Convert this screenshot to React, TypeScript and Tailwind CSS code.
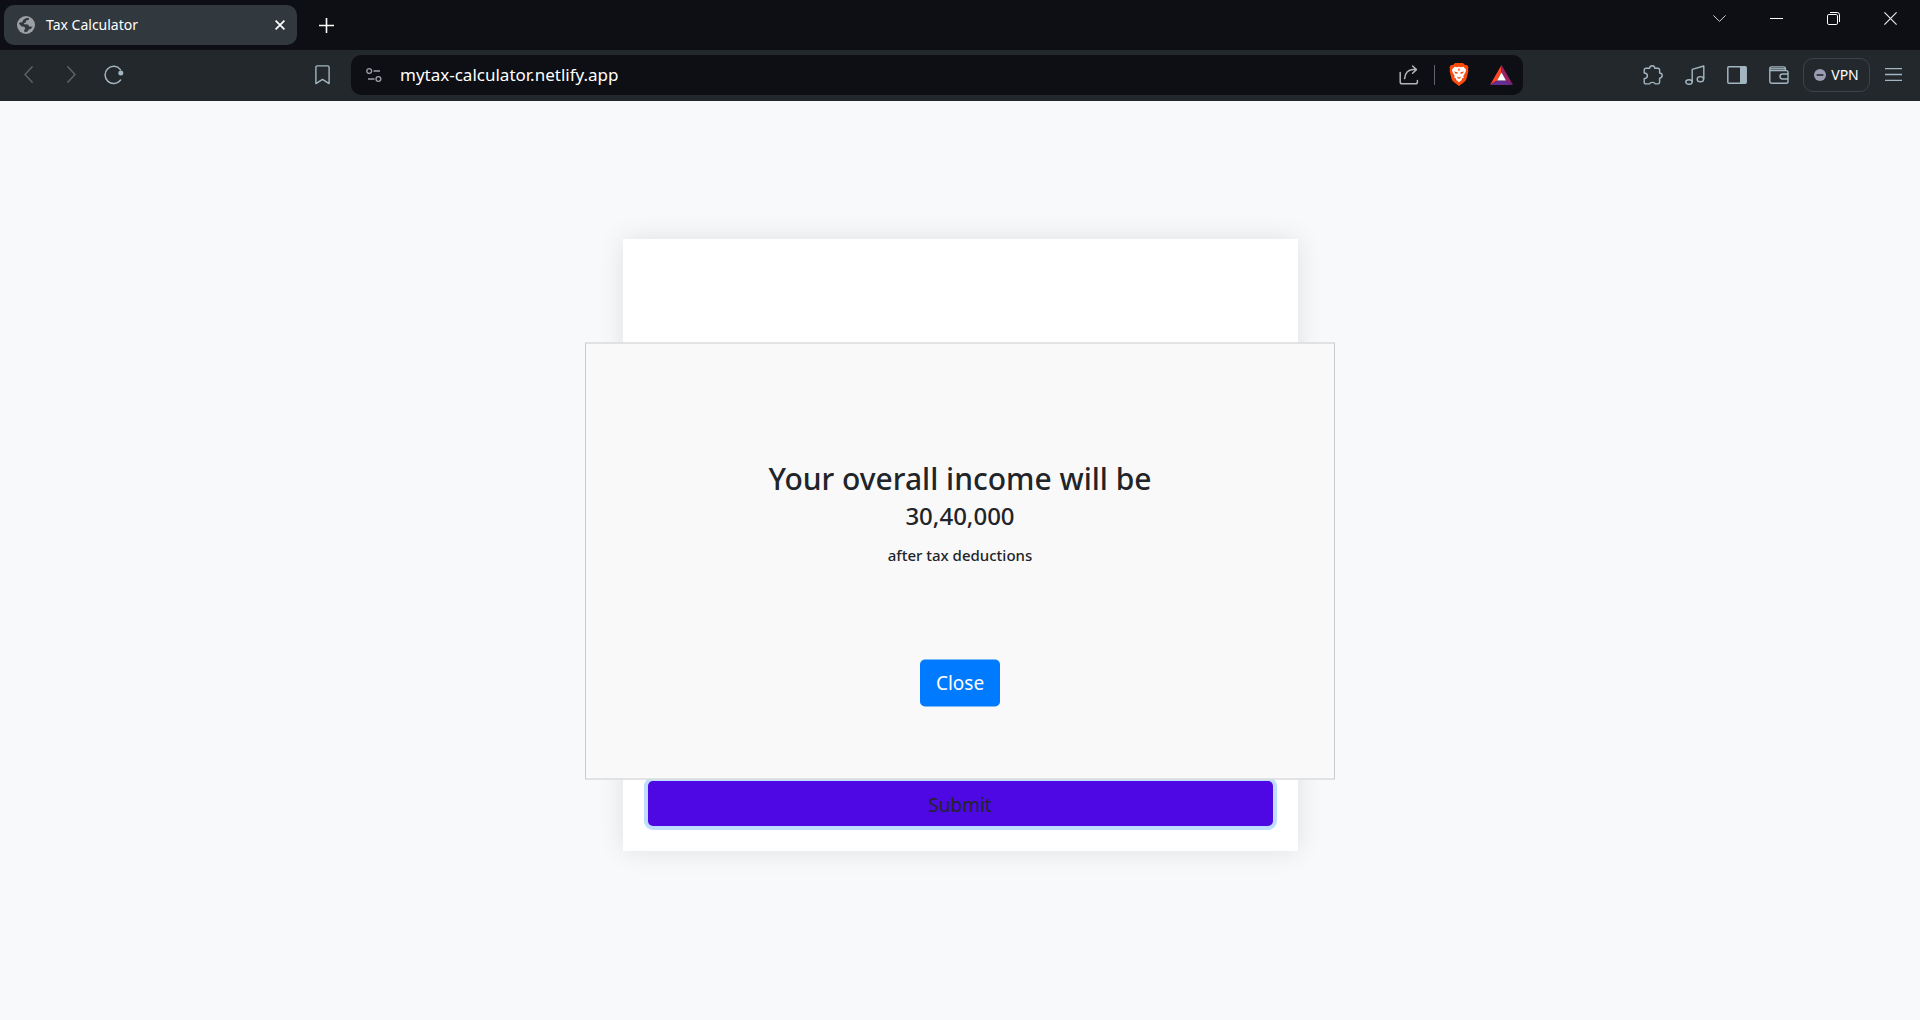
import type { ReactNode } from "react";

function IconButton({ label, className = "", children }: { label: string; className?: string; children: ReactNode }) {
  return (
    <button type="button" aria-label={label} className={`flex shrink-0 items-center justify-center ${className}`}>
      {children}
    </button>
  );
}

function GlobeIcon() {
  return (
    <svg width="18" height="18" viewBox="0 0 18 18" aria-hidden="true">
      <circle cx="9" cy="9" r="9" fill="#9aa0a6" />
      <path
        d="M9.2 2 L12 1.9 L11.6 3.9 L9 4.6 L8.8 6.6 L6.8 7.2 L7 8.3 L11 8.4 L12.2 10.6 L15.6 10.8 L13.6 13 L11.6 13.4 L10.6 15.4 L7.8 16.2 L7 14.4 L8.4 12.2 L7 10.8 L4.6 10.4 L2 7.8 L2.6 6.6 L5.2 6.2 L6.2 4 Z"
        fill="#31393e"
      />
    </svg>
  );
}

function BraveIcon() {
  return (
    <svg width="20" height="23" viewBox="0 0 20 23" aria-hidden="true">
      <path
        d="M6 0 H14 L16 2 L18 2 L19.6 4.2 L19 6 L19.4 8 L17.4 16 Q16.8 18 15 19.3 L10 23 L5 19.3 Q3.2 18 2.6 16 L.6 8 L1 6 L.4 4.2 L2 2 L4 2 Z"
        fill="#fb4a0b"
      />
      <path
        d="M5.6 3.8 L8 4.3 L10 3.8 L12 4.3 L14.4 3.8 L17 6.6 L16.6 9 L14.3 13 L14.8 15 L13 15.2 L12.8 17 L10 19.2 L7.2 17 L7 15.2 L5.2 15 L5.7 13 L3.4 9 L3 6.6 Z"
        fill="#fff"
      />
      <path
        d="M5 8.4 L8.6 9.2 L8.4 10.8 L6.4 10.6 Z M15 8.4 L11.4 9.2 L11.6 10.8 L13.6 10.6 Z M8 13.4 L10 14.4 L12 13.4 L11.4 15 L10 16 L8.6 15 Z M9.2 5.6 H10.8 L10.5 8 H9.5 Z"
        fill="#fb4a0b"
      />
    </svg>
  );
}

function TabStrip() {
  return (
    <header className="flex h-[50px] items-start bg-[#0d0f14] text-white">
      <div className="ml-1 mt-[5px] flex h-10 w-[293px] items-center rounded-[10px] bg-[#31393e] pl-[13px] pr-[7px]">
        <GlobeIcon />
        <span className="ml-[11px] flex-1 text-[14px] leading-5">Tax Calculator</span>
        <IconButton label="Close tab" className="size-5">
          <svg width="10" height="10" viewBox="0 0 10 10" stroke="currentColor" strokeWidth="1.7" aria-hidden="true">
            <path d="M.6 .6 L9.4 9.4 M9.4 .6 L.6 9.4" />
          </svg>
        </IconButton>
      </div>
      <IconButton label="New tab" className="ml-[14px] mt-[10px] size-[30px]">
        <svg width="15" height="15" viewBox="0 0 15 15" stroke="currentColor" strokeWidth="1.6" aria-hidden="true">
          <path d="M7.5 0 V15 M0 7.5 H15" />
        </svg>
      </IconButton>
      <div className="ml-auto flex pr-px">
        <IconButton label="Search tabs" className="h-[37px] w-[57px]">
          <svg width="13" height="7" viewBox="0 0 13 7" fill="none" stroke="#d0d0d2" aria-hidden="true">
            <path d="M.4 .4 L6.5 6.4 L12.6 .4" />
          </svg>
        </IconButton>
        <IconButton label="Minimize" className="h-[37px] w-[57px]">
          <svg width="13" height="1" viewBox="0 0 13 1" fill="#fff" aria-hidden="true">
            <path d="M0 0 H13 V1 H0 Z" />
          </svg>
        </IconButton>
        <IconButton label="Restore" className="h-[37px] w-[57px]">
          <svg width="13" height="13" viewBox="0 0 13 13" fill="none" stroke="#fff" aria-hidden="true">
            <rect x=".5" y="2.5" width="10" height="10" rx="1.3" />
            <path d="M3 .5 H10.2 Q12.5 .5 12.5 2.8 V10" />
          </svg>
        </IconButton>
        <IconButton label="Close window" className="h-[37px] w-[57px]">
          <svg width="13" height="13" viewBox="0 0 13 13" stroke="#e8e8e8" strokeWidth="1.2" aria-hidden="true">
            <path d="M.4 .4 L12.6 12.6 M12.6 .4 L.4 12.6" />
          </svg>
        </IconButton>
      </div>
    </header>
  );
}

function AddressBar() {
  return (
    <div className="flex h-10 flex-1 items-center rounded-[10px] bg-[#0d0f14] pl-[13px] pr-[9px]">
      <IconButton label="View site information" className="size-5">
        <svg width="16" height="16" viewBox="0 0 16 16" fill="none" stroke="#a0a1a8" strokeWidth="1.3" aria-hidden="true">
          <circle cx="3.2" cy="4" r="2.4" />
          <circle cx="12.4" cy="12" r="2.4" />
          <path d="M7.5 4 H14 M2 12 H8.5" />
        </svg>
      </IconButton>
      <input
        aria-label="Address"
        defaultValue="mytax-calculator.netlify.app"
        className="ml-4 min-w-0 flex-1 bg-transparent text-[17px] leading-6 text-white outline-none"
      />
      <IconButton label="Share" className="size-6">
        <svg width="20" height="20" viewBox="0 0 20 20" fill="none" stroke="#b3b4b8" strokeWidth="1.5" strokeLinecap="round" strokeLinejoin="round" aria-hidden="true">
          <path d="M1.2 7.5 V17 Q1.2 18.8 3 18.8 H16.6 Q18.4 18.8 18.4 17 V15.5" />
          <path d="M13.6 1 L17.4 4.6 L13.6 8.2 M17 4.6 H14 Q6.4 5.2 5.6 13.6" />
        </svg>
      </IconButton>
      <span className="ml-[13px] h-5 w-px bg-[#62646b]" />
      <IconButton label="Brave Shields" className="ml-[11px] size-[26px]">
        <BraveIcon />
      </IconButton>
      <IconButton label="Brave Rewards" className="ml-4 size-[26px]">
        <svg width="23" height="20" viewBox="0 0 23 20" aria-hidden="true">
          <path d="M11.5 0 L0 20 L7 15.5 L11.5 7.5 Z" fill="#ff4724" />
          <path d="M11.5 0 L23 20 L16 15.5 L11.5 7.5 Z" fill="#9e1f63" />
          <path d="M0 20 H23 L16 15.5 H7 Z" fill="#662d91" />
          <path d="M11.5 7.5 L16 15.5 H7 Z" fill="#fff" />
        </svg>
      </IconButton>
    </div>
  );
}

function Toolbar() {
  return (
    <nav aria-label="Browser toolbar" className="flex h-[51px] items-center bg-[#22282c] pb-[2px] text-[#a3b5c0]">
      <div className="flex w-[351px] shrink-0 items-center pl-4 pr-[17px]">
        <IconButton label="Back" className="size-6">
          <svg width="9" height="17" viewBox="0 0 9 17" fill="none" stroke="#5d6569" strokeWidth="1.4" strokeLinecap="round" aria-hidden="true">
            <path d="M8.2 .8 L1 8.5 L8.2 16.2" />
          </svg>
        </IconButton>
        <IconButton label="Forward" className="ml-[19px] size-6">
          <svg width="9" height="17" viewBox="0 0 9 17" fill="none" stroke="#5d6569" strokeWidth="1.4" strokeLinecap="round" aria-hidden="true">
            <path d="M.8 .8 L8 8.5 L.8 16.2" />
          </svg>
        </IconButton>
        <IconButton label="Reload" className="ml-[19px] size-6">
          <svg width="20" height="20" viewBox="0 0 20 20" fill="none" stroke="#a3b5c0" strokeWidth="1.5" strokeLinecap="round" aria-hidden="true">
            <path d="M16.4 4.6 A8.6 8.6 0 1 0 16.6 15" />
            <circle cx="16.8" cy="8" r="2.5" fill="#a3b5c0" stroke="none" />
          </svg>
        </IconButton>
        <IconButton label="Bookmark this tab" className="ml-auto size-6">
          <svg width="15" height="20" viewBox="0 0 15 20" fill="none" stroke="#a3b5c0" strokeWidth="1.4" strokeLinejoin="round" aria-hidden="true">
            <path d="M.9 18.6 V2.4 Q.9 .9 2.4 .9 H12.6 Q14.1 .9 14.1 2.4 V18.6 L7.5 14.4 Z" />
          </svg>
        </IconButton>
      </div>
      <AddressBar />
      <div className="flex w-[397px] shrink-0 items-center justify-end pr-[15px]">
        <IconButton label="Extensions" className="size-6">
          <svg width="20" height="20" viewBox="0 0 20 20" fill="none" stroke="currentColor" strokeWidth="1.4" strokeLinejoin="round" aria-hidden="true">
            <path d="M3 3.2 H6.6 Q6.8 .8 9.2 .8 Q11.6 .8 11.8 3.2 H14.8 Q16.6 3.2 16.6 5 V8 Q19.2 8.2 19.2 10.6 Q19.2 13 16.6 13.2 V17.2 Q16.6 18.9 14.8 18.9 H12.2 Q11.8 17.4 9.4 17.4 Q7 17.4 6.6 18.9 H3 Q1.2 18.9 1.2 17.2 V13.6 Q4.4 13.4 4.4 10.8 Q4.4 8.2 1.2 8 V5 Q1.2 3.2 3 3.2 Z" />
          </svg>
        </IconButton>
        <IconButton label="Media" className="ml-[18px] size-6">
          <svg width="20" height="20" viewBox="0 0 20 20" fill="none" stroke="currentColor" strokeWidth="1.4" strokeLinejoin="round" aria-hidden="true">
            <ellipse cx="4" cy="17" rx="3.2" ry="2.3" />
            <ellipse cx="15.4" cy="14.2" rx="3.2" ry="2.6" />
            <path d="M7.2 17 V4.4 L18.8 1 V14.2" />
          </svg>
        </IconButton>
        <IconButton label="Sidebar" className="ml-[18px] size-6">
          <svg width="20" height="18" viewBox="0 0 20 18" fill="none" aria-hidden="true">
            <rect x=".8" y=".8" width="18.4" height="16.4" rx="1" stroke="currentColor" strokeWidth="1.5" />
            <path d="M13 1 H19 V17 H13 Z" fill="currentColor" />
          </svg>
        </IconButton>
        <IconButton label="Wallet" className="ml-[18px] size-6">
          <svg width="20" height="18" viewBox="0 0 20 18" fill="none" stroke="currentColor" strokeWidth="1.4" strokeLinejoin="round" aria-hidden="true">
            <path d="M.8 3 V15 Q.8 17.2 3 17.2 H17.2 Q19 17.2 19 15.4 V6.4 Q19 4.6 17.2 4.6 H2.8 Q.8 4.6 .8 2.8 Q.8 .9 2.8 .9 H14.6 Q16.4 .9 16.4 2.6 V4.6" />
            <path d="M19 8 H13.4 Q11 8 11 10.6 Q11 13 13.4 13 H19" />
            <path d="M1.5 2.8 H16" />
          </svg>
        </IconButton>
        <button type="button" className="ml-3 flex h-[34px] w-[67px] items-center justify-center gap-[5px] rounded-[10px] border border-[#3b4549] text-[14px] leading-5 text-white">
          <svg width="12" height="12" viewBox="0 0 12 12" aria-hidden="true">
            <circle cx="6" cy="6" r="6" fill="#9a9cb4" />
            <path d="M2.6 5.2 H9.4 V6.8 H2.6 Z" fill="#22282c" />
          </svg>
          VPN
        </button>
        <IconButton label="Menu" className="ml-[11px] size-6">
          <svg width="17" height="13" viewBox="0 0 17 13" stroke="currentColor" strokeWidth="1.3" aria-hidden="true">
            <path d="M0 .7 H17 M0 6.5 H17 M0 12.3 H17" />
          </svg>
        </IconButton>
      </div>
    </nav>
  );
}

function ResultDialog() {
  return (
    <div
      role="dialog"
      aria-labelledby="result-title"
      className="absolute left-1/2 top-1/2 flex w-[750px] max-w-full -translate-x-1/2 -translate-y-1/2 flex-col items-center border border-[#cccccc] bg-[#f9f9f9] pb-[72px] pt-[115px] text-center text-[#212529]"
    >
      <h2 id="result-title" className="text-[30px] font-medium leading-10">
        Your overall income will be
      </h2>
      <p className="text-[24px] font-medium leading-[34px]">30,40,000</p>
      <p className="mt-[10px] text-[15px] font-medium leading-6">after tax deductions</p>
      <button type="button" className="mt-[93px] h-[47px] rounded-[5px] bg-[#007bff] px-4 text-[19px] leading-[30px] text-white">
        Close
      </button>
    </div>
  );
}

export default function App() {
  return (
    <div className="flex min-h-screen flex-col bg-[#f8f9fb] font-['Noto_Sans',sans-serif]">
      <TabStrip />
      <Toolbar />
      <main className="relative flex flex-1 items-center justify-center pb-[31px]">
        <form
          className="flex min-h-[612px] w-[675px] max-w-full flex-col justify-end bg-white p-[25px] shadow-[0_0_25px_rgba(0,0,0,0.1)]"
          onSubmit={(event) => event.preventDefault()}
        >
          <button
            type="submit"
            className="h-[45px] w-full rounded-[5px] bg-[#4d08e3] pt-[2px] text-[19px] leading-[30px] text-[#212529] ring-4 ring-[#bfdeff]"
          >
            Submit
          </button>
        </form>
        <ResultDialog />
      </main>
    </div>
  );
}
